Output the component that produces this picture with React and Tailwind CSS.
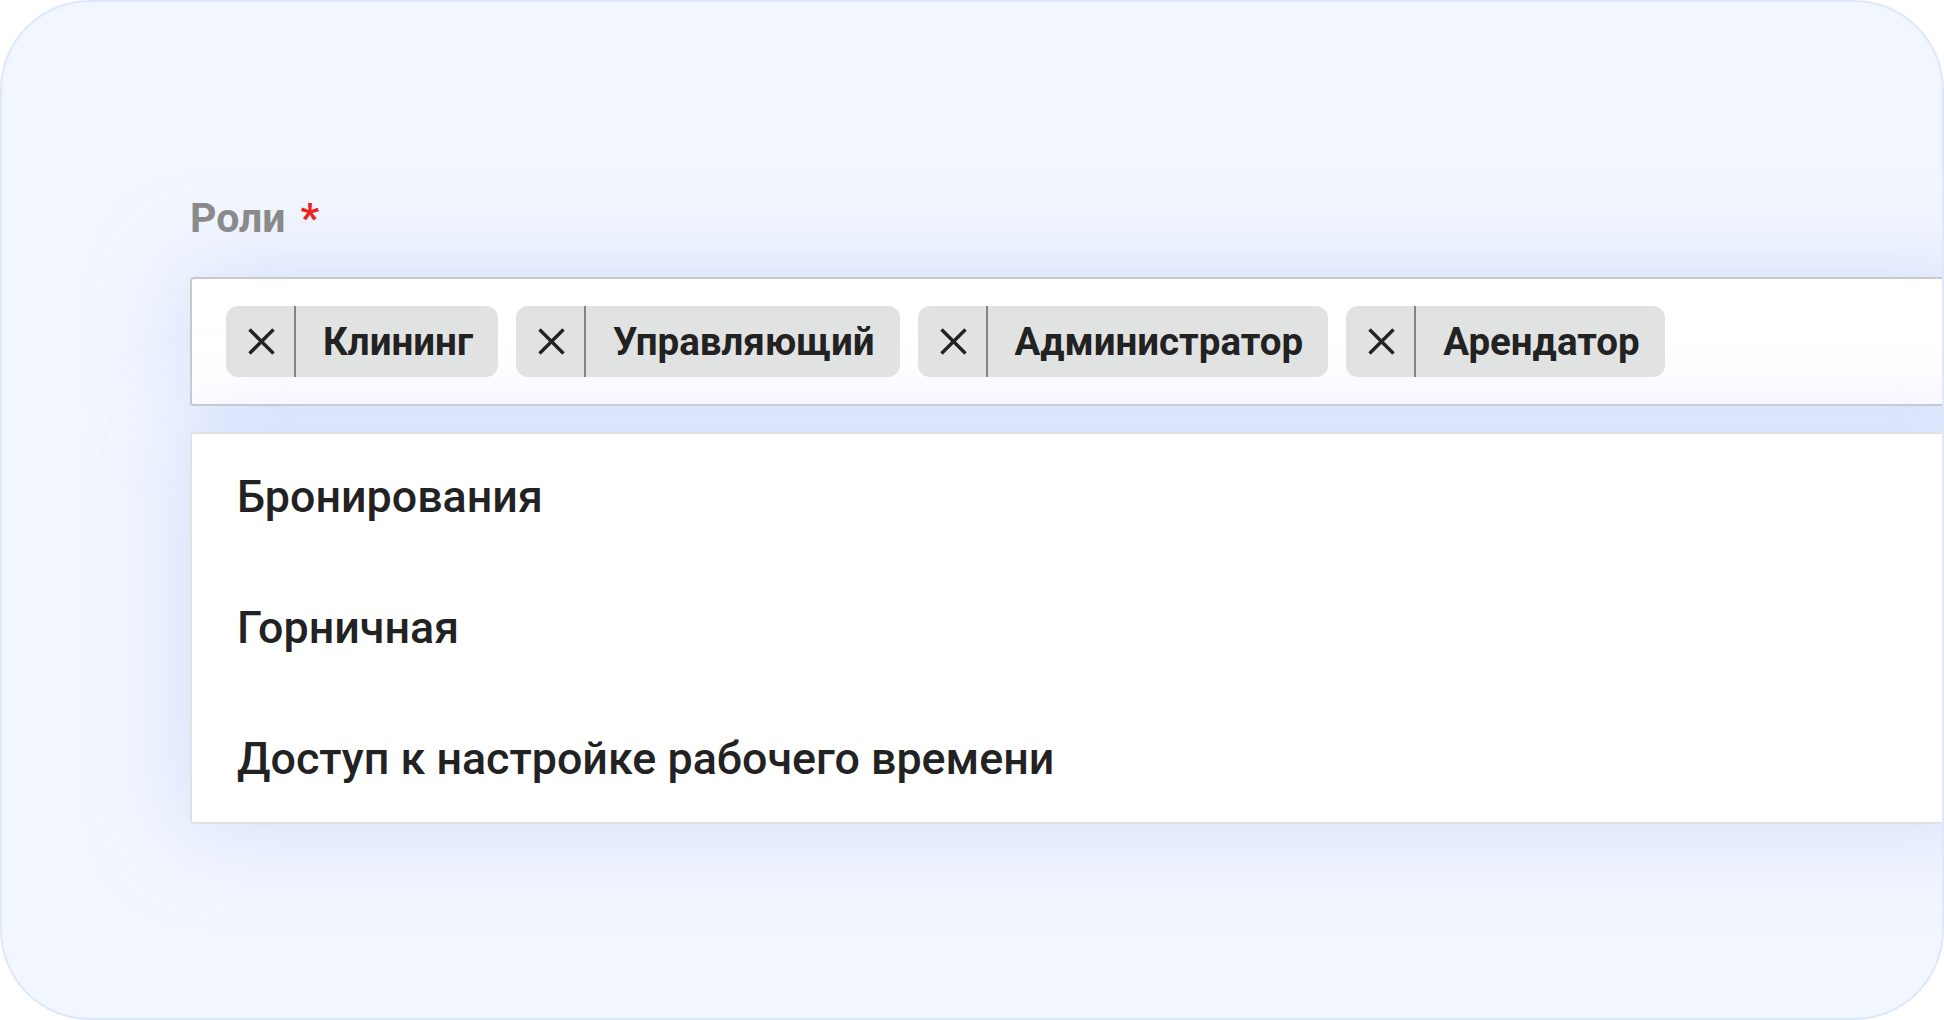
import React from "react";

function XIcon() {
  return (
    <svg width="27" height="27" viewBox="0 0 27 27" className="shrink-0">
      <line x1="1.5" y1="1.5" x2="25.5" y2="25.5" stroke="#222" strokeWidth="3.4" />
      <line x1="25.5" y1="1.5" x2="1.5" y2="25.5" stroke="#222" strokeWidth="3.4" />
    </svg>
  );
}

function Chip({ label }) {
  return (
    <div className="flex h-[71px] items-stretch rounded-[12px] bg-[#e1e2e2] pl-[22px] pr-[25px]">
      <div className="flex items-center">
        <XIcon />
      </div>
      <div className="ml-[19px] w-[2px] bg-[#848484]" />
      <div className="ml-[27px] flex items-center text-[38.5px] font-bold leading-[40px] text-[#222]">
        {label}
      </div>
    </div>
  );
}

export default function App() {
  const chips = ["Клининг", "Управляющий", "Администратор", "Арендатор"];
  const items = ["Бронирования", "Горничная", "Доступ к настройке рабочего времени"];
  return (
    <div className="h-[1020px] w-full bg-white" style={{ fontFamily: "Roboto, 'Noto Sans', sans-serif" }}>
      <div className="box-border h-[1020px] w-full overflow-hidden rounded-[90px] border-2 border-[#dfe7fb] bg-[#f2f6fe] pl-[188px] pt-[196px]">
        <div className="w-[1800px]">
          <div className="flex h-[40px] text-[41px] font-bold leading-[40px] text-[#8a8a8a]">
            <span>Роли</span>
            <span className="ml-[15px] text-[#e8231c]">*</span>
          </div>
          <div className="mt-[39px] box-border flex h-[129px] items-start gap-[18px] rounded-[4px] border-2 border-[#c9c9c9] bg-white pl-[34px] pt-[27px] shadow-[0_0_90px_rgba(185,205,250,0.6)]">
            {chips.map((c) => (
              <Chip key={c} label={c} />
            ))}
          </div>
          <div className="mt-[26px] box-border flex flex-col gap-[87px] rounded-[4px] border-2 border-[#e0e1e3] bg-white pb-[41px] pl-[45px] pt-[41px] shadow-[0_0_90px_rgba(185,205,250,0.6)]">
            {items.map((t) => (
              <div key={t} className="h-[44px] text-[44.8px] font-medium leading-[44px] text-[#222]">
                {t}
              </div>
            ))}
          </div>
        </div>
      </div>
    </div>
  );
}
